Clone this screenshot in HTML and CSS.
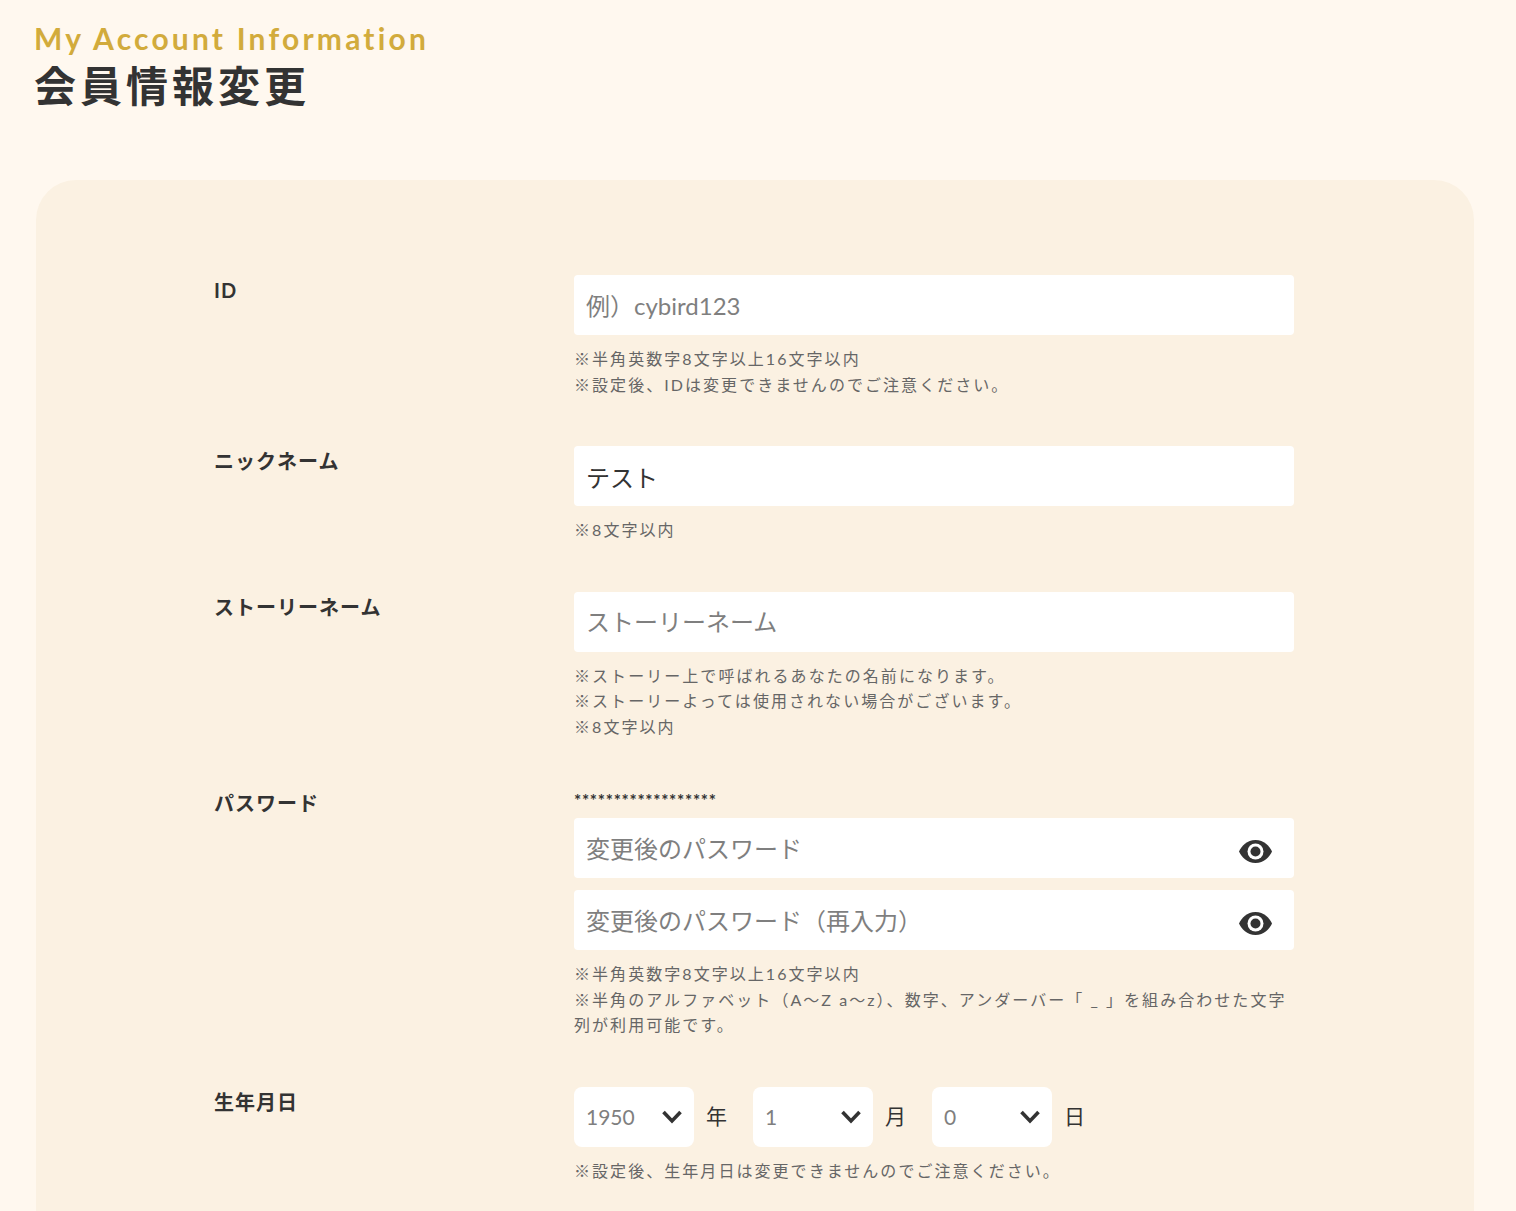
FILE: index.html
```html
<!DOCTYPE html>
<html lang="ja">
<head>
<meta charset="utf-8">
<title>会員情報変更</title>
<link rel="stylesheet" href="styles.css">
</head>
<body>
<svg class="defs" width="0" height="0" aria-hidden="true">
  <symbol id="eye" viewBox="0 0 33 23">
    <path fill="#333" d="M16.5 0C25 0 30.6 6 33 11.5 30.6 17 25 23 16.5 23S2.400 17 0 11.500C2.400 6 8 0 16.500 0Z"/>
    <circle cx="16.500" cy="11.500" r="8" fill="#fff"/>
    <circle cx="16.500" cy="11.500" r="5" fill="#333"/>
  </symbol>
  <symbol id="chev" viewBox="0 0 20 14">
    <path fill="none" stroke="#333" stroke-width="3.600" d="M1.500 2 10 11 18.500 2"/>
  </symbol>
</svg>
<header class="page-head">
  <p class="eyebrow">My Account Information</p>
  <h1 class="title">会員情報変更</h1>
</header>
<main class="card">
  <section class="row">
    <div class="label">ID</div>
    <div class="field">
      <input class="input" type="text" placeholder="例）cybird123">
      <p class="note">※半角英数字8文字以上16文字以内<br>※設定後、IDは変更できませんのでご注意ください。</p>
    </div>
  </section>
  <section class="row">
    <div class="label">ニックネーム</div>
    <div class="field">
      <input class="input" type="text" value="テスト">
      <p class="note">※8文字以内</p>
    </div>
  </section>
  <section class="row">
    <div class="label">ストーリーネーム</div>
    <div class="field">
      <input class="input" type="text" placeholder="ストーリーネーム">
      <p class="note">※ストーリー上で呼ばれるあなたの名前になります。<br>※ストーリーよっては使用されない場合がございます。<br>※8文字以内</p>
    </div>
  </section>
  <section class="row">
    <div class="label">パスワード</div>
    <div class="field">
      <div class="current">******************</div>
      <div class="pw">
        <input class="input" type="password" placeholder="変更後のパスワード">
        <svg class="eye"><use href="#eye"/></svg>
      </div>
      <div class="pw pw-second">
        <input class="input" type="password" placeholder="変更後のパスワード（再入力）">
        <svg class="eye"><use href="#eye"/></svg>
      </div>
      <p class="note">※半角英数字8文字以上16文字以内<br>※半角のアルファベット（A〜Z a〜z）、数字、アンダーバー「 _ 」を組み合わせた文字列が利用可能です。</p>
    </div>
  </section>
  <section class="row row-last">
    <div class="label">生年月日</div>
    <div class="field">
      <div class="dates">
        <div class="sel"><select class="select"><option>1950</option></select><svg class="chev"><use href="#chev"/></svg></div>
        <span class="unit">年</span>
        <div class="sel"><select class="select"><option>1</option></select><svg class="chev"><use href="#chev"/></svg></div>
        <span class="unit">月</span>
        <div class="sel"><select class="select"><option>0</option></select><svg class="chev"><use href="#chev"/></svg></div>
        <span class="unit">日</span>
      </div>
      <p class="note">※設定後、生年月日は変更できませんのでご注意ください。</p>
    </div>
  </section>
</main>
</body>
</html>
```
FILE: styles.css
```css
* { box-sizing: border-box; }
html, body { margin: 0; height: 1211px; overflow: hidden; }
body {
  background: #fff8ef;
  color: #333;
  font-family: Lato, "Noto Sans CJK JP", sans-serif;
}
.defs { position: absolute; }
.page-head { padding: 20px 36px 0 34px; height: 180px; }
.eyebrow {
  margin: 0;
  font-size: 30px;
  line-height: 36px;
  letter-spacing: 3.2px;
  font-weight: 700;
  color: #d2ab3c;
}
.title {
  margin: 0;
  padding-top: 2px;
  font-size: 42px;
  line-height: 56px;
  letter-spacing: 4px;
  font-weight: 700;
  color: #333;
}
.card {
  height: 1031px;
  margin: 0 42px 0 36px;
  padding: 95px 180px 0 178px;
  background: #fbf1e2;
  border-radius: 40px 40px 0 0;
}
.row { display: grid; grid-template-columns: 360px 720px; margin-bottom: 49px; }
.row-last { margin-bottom: 0; }
.label { font-size: 20px; line-height: 30px; letter-spacing: 1px; font-weight: 700; color: #333; }
.input {
  display: block;
  width: 100%;
  height: 60px;
  padding: 0 12px;
  border: 0;
  border-radius: 4px;
  background: #fff;
  color: #333;
  font: 24px/1.2 Lato, "Noto Sans CJK JP", sans-serif;
}
.input::placeholder { color: #7f7f7f; opacity: 1; }
.note {
  margin: 11px 0 0;
  font-size: 16px;
  line-height: 25.5px;
  letter-spacing: 2.05px;
  color: #666;
}
.current { font-size: 17px; line-height: 26px; letter-spacing: 0.7px; height: 30px; font-weight: 700; }
.pw { position: relative; }
.pw-second { margin-top: 12px; }
.eye { position: absolute; right: 22px; top: 22px; width: 33px; height: 23px; }
.dates { display: flex; align-items: center; }
.sel { position: relative; width: 120px; height: 60px; }
.select {
  display: block;
  width: 100%;
  height: 60px;
  padding: 0 12px;
  border: 0;
  border-radius: 8px;
  background: #fff;
  color: #7f7f7f;
  appearance: none;
  font: 21px Lato, "Noto Sans CJK JP", sans-serif;
}
.chev { position: absolute; right: 12px; top: 23px; width: 20px; height: 14px; }
.unit { width: 59px; padding-left: 12px; padding-bottom: 4px; font-size: 21px; color: #333; }
```
